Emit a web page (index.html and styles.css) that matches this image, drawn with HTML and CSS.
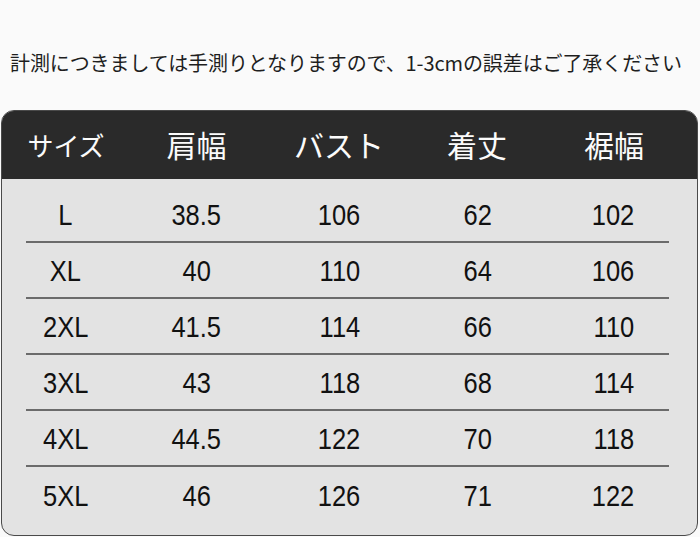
FILE: index.html
```html
<!DOCTYPE html>
<html lang="ja">
<head>
<meta charset="utf-8">
<link rel="stylesheet" href="styles.css">
</head>
<body>
<p class="note">計測につきましては手測りとなりますので、1-3cmの誤差はご了承ください</p>
<div class="card">
  <div class="row head">
    <span class="small">サイズ</span><span>肩幅</span><span>バスト</span><span>着丈</span><span>裾幅</span>
  </div>
  <div class="body">
    <div class="row"><span>L</span><span>38.5</span><span>106</span><span>62</span><span>102</span></div>
    <div class="row"><span>XL</span><span>40</span><span>110</span><span>64</span><span>106</span></div>
    <div class="row"><span>2XL</span><span>41.5</span><span>114</span><span>66</span><span>110</span></div>
    <div class="row"><span>3XL</span><span>43</span><span>118</span><span>68</span><span>114</span></div>
    <div class="row"><span>4XL</span><span>44.5</span><span>122</span><span>70</span><span>118</span></div>
    <div class="row last"><span>5XL</span><span>46</span><span>126</span><span>71</span><span>122</span></div>
  </div>
</div>
</body>
</html>
```
FILE: styles.css
```css
html, body {
  margin: 0;
  padding: 0;
  background: #fafafa;
  font-family: "Liberation Sans", "Noto Sans CJK JP", sans-serif;
}
.note {
  margin: 0;
  height: 110px;
  box-sizing: border-box;
  padding-top: 51px;
  padding-left: 10px;
  font-size: 20px;
  line-height: 24px;
  color: #1e1e1e;
  font-family: "Noto Sans CJK JP", sans-serif;
  letter-spacing: -0.1px;
  white-space: nowrap;
}
.card {
  margin: 0 2px 0 1px;
  height: 426px;
  box-sizing: border-box;
  border: 1.5px solid #4a4a4a;
  border-radius: 13px;
  overflow: hidden;
  background: #e3e3e3;
}
.row {
  display: grid;
  align-items: center;
  justify-items: center;
}
.head {
  grid-template-columns: 128px 133px 152px 124px 150px;
  height: 68px;
  background: #2a2a2a;
  color: #fbfbfb;
  font-family: "Noto Sans CJK JP", sans-serif;
  font-size: 30px;
  padding-bottom: 2px;
  box-sizing: border-box;
}
.head .small {
  font-size: 26px;
}
.body {
  padding-top: 8px;
}
.body .row {
  height: 56px;
  box-sizing: border-box;
  font-size: 30px;
  color: #111;
  margin: 0 28px 0 24px;
  grid-template-columns: 79px 183px 103px 173px 99px;
  border-bottom: 2px solid #6b6b6b;
  padding-top: 2px;
}
.body .row.last {
  border-bottom: none;
}
.body .row span {
  transform: scaleX(0.85);
  display: inline-block;
}
```
